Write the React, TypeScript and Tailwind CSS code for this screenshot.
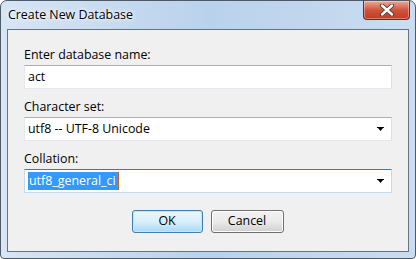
import React from 'react';

const font = { fontFamily: '"Segoe UI", "Open Sans", "Noto Sans", sans-serif' };

const Arrow = () => (
  <svg width="8" height="5" viewBox="0 0 8 5" className="shrink-0">
    <path d="M0 0h7v1H0z M1 1h5L3.5 4z" fill="#000" />
  </svg>
);

const Field = ({ children, focused = false, dropdown = false }: { children: React.ReactNode; focused?: boolean; dropdown?: boolean }) => (
  <div
    className={`h-[24px] flex items-center bg-white pl-[3px] pr-[6px] border ${
      focused
        ? 'border-[#c5daed] border-t-[#3d7bad]'
        : 'border-[#e3e9ef] border-t-[#abadb3] border-r-[#dbdfe6] border-b-[#e3e9ef]'
    }`}
  >
    <div className="flex-1 flex items-center text-[12.4px] text-black leading-[16px]">{children}</div>
    {dropdown && <Arrow />}
  </div>
);

const Label = ({ text }: { text: string }) => (
  <div className="text-[12.4px] leading-[16px] text-black">{text}</div>
);

export default function App() {
  return (
    <div className="w-[416px] h-[259px] bg-white" style={font}>
      <div className="w-[416px] h-[259px] flex flex-col rounded-t-[7px] rounded-b-[4px] border border-[#4e5a66] bg-gradient-to-r from-[#d7e5f4] via-[#b9d2ec] to-[#cadcf0] overflow-hidden">
        {/* title bar */}
        <div className="h-[28px] flex items-start justify-between shrink-0">
          <div className="pl-[7px] pt-[6px] text-[12.4px] leading-[16px] text-black [text-shadow:0_0_6px_#fff,0_0_3px_#fff]">
            Create New Database
          </div>
          <div className="mr-[5px] w-[47px] h-[19px] rounded-b-[4px] border border-t-0 border-[#6b2a22] bg-gradient-to-b from-[#e9a99a] via-[#d0533c] to-[#c23a22] flex items-center justify-center shadow-[inset_0_0_0_1px_rgba(255,255,255,0.35)]">
            <svg width="16" height="12" viewBox="0 0 16 12">
              <path d="M3 1.5l10 9M13 1.5l-10 9" stroke="#3b3b3b" strokeWidth="4.2" strokeLinecap="round" />
              <path d="M3 1.5l10 9M13 1.5l-10 9" stroke="#fff" strokeWidth="2.4" strokeLinecap="round" />
            </svg>
          </div>
        </div>

        {/* client area */}
        <div className="mx-[6px] h-[223px] border border-[#66737f] bg-[#f0f0f0] flex flex-col px-[16px] pt-[17px]">
          <Label text="Enter database name:" />
          <div className="mt-[2px]">
            <Field>act</Field>
          </div>

          <div className="mt-[10px]">
            <Label text="Character set:" />
          </div>
          <div className="mt-[2px]">
            <Field dropdown>utf8 -- UTF-8 Unicode</Field>
          </div>

          <div className="mt-[10px]">
            <Label text="Collation:" />
          </div>
          <div className="mt-[2px]">
            <Field dropdown focused>
              <span className="bg-[#3399ff] text-white leading-[18px] pl-[1px] pr-[2px]">utf8_general_ci</span>
              <span className="w-[1px] h-[18px] bg-[#c8671c]" />
            </Field>
          </div>

          <div className="mt-[17px] flex justify-center gap-[8px] pr-[1px]">
            <button className="w-[71px] h-[23px] rounded-[3px] border border-[#3c7fb1] bg-gradient-to-b from-[#eaf6fd] via-[#d9f0fc] to-[#a7d9f5] text-[12.4px] text-black shadow-[inset_0_0_0_1px_#c0e8f9]">
              OK
            </button>
            <button className="w-[73px] h-[23px] rounded-[3px] border border-[#707070] bg-gradient-to-b from-[#f2f2f2] via-[#ebebeb] to-[#cfcfcf] text-[12.4px] text-black shadow-[inset_0_0_0_1px_#fcfcfc]">
              Cancel
            </button>
          </div>
        </div>
      </div>
    </div>
  );
}
